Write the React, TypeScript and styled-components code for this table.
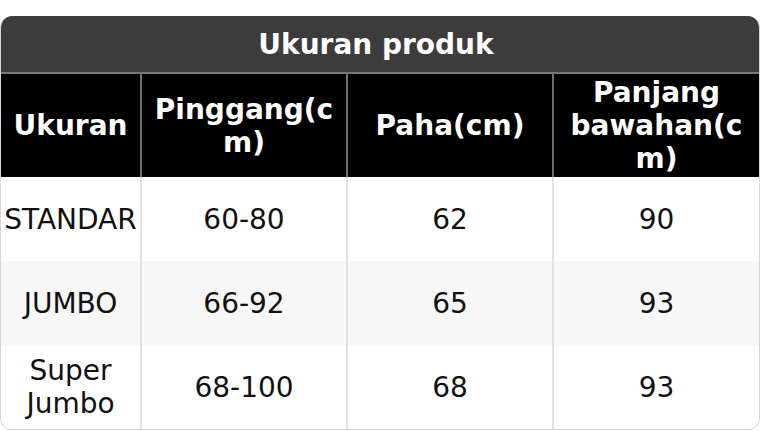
import React from 'react';
import styled, { createGlobalStyle } from 'styled-components';

const GlobalStyle = createGlobalStyle`
  html, body {
    margin: 0;
    padding: 0;
    background: #ffffff;
  }
  body {
    font-family: "DejaVu Sans", Verdana, sans-serif;
  }
`;

const Page = styled.div`
  padding-top: 16px;
  width: 760px;
`;

const Card = styled.div`
  width: 760px;
  border-radius: 12px;
  overflow: hidden;
  border: 1px solid #d6d6d6;
  border-top: none;
  box-sizing: border-box;
`;

const Title = styled.div`
  height: 56px;
  padding-right: 8px;
  background: #3c3c3c;
  color: #ffffff;
  font-weight: bold;
  font-size: 28px;
  display: flex;
  align-items: center;
  justify-content: center;
  border-bottom: 2px solid #777777;
`;

const Table = styled.table`
  width: 100%;
  border-collapse: collapse;
  table-layout: fixed;
  font-size: 28px;
  line-height: normal;
`;

const HeadCell = styled.th`
  background: #000000;
  color: #ffffff;
  font-weight: bold;
  height: 103px;
  padding: 0 4px;
  text-align: center;
  vertical-align: middle;
  border-left: 2px solid #6e6e6e;
  overflow-wrap: anywhere;
  &:first-child {
    border-left: none;
  }
`;

const Row = styled.tr<{ $striped: boolean }>`
  background: ${p => (p.$striped ? '#f7f7f7' : '#ffffff')};
`;

const Cell = styled.td`
  height: 84px;
  padding: 0;
  text-align: center;
  vertical-align: middle;
  color: #111111;
  border-left: 2px solid #e2e2e2;
  &:first-child {
    border-left: none;
  }
`;

const rows = [
  ['STANDAR', '60-80', '62', '90'],
  ['JUMBO', '66-92', '65', '93'],
  ['Super Jumbo', '68-100', '68', '93'],
];

const App: React.FC = () => {
  return (
    <Page>
      <GlobalStyle />
      <Card>
        <Title>Ukuran produk</Title>
        <Table>
          <colgroup>
            <col style={{ width: 140 }} />
            <col style={{ width: 206 }} />
            <col style={{ width: 206 }} />
            <col />
          </colgroup>
          <thead>
            <tr>
              <HeadCell>Ukuran</HeadCell>
              <HeadCell>Pinggang(cm)</HeadCell>
              <HeadCell>Paha(cm)</HeadCell>
              <HeadCell>Panjang bawahan(cm)</HeadCell>
            </tr>
          </thead>
          <tbody>
            {rows.map((r, i) => (
              <Row key={r[0]} $striped={i % 2 === 1}>
                {r.map((v, j) => (
                  <Cell key={j}>{v}</Cell>
                ))}
              </Row>
            ))}
          </tbody>
        </Table>
      </Card>
    </Page>
  );
};

export default App;
